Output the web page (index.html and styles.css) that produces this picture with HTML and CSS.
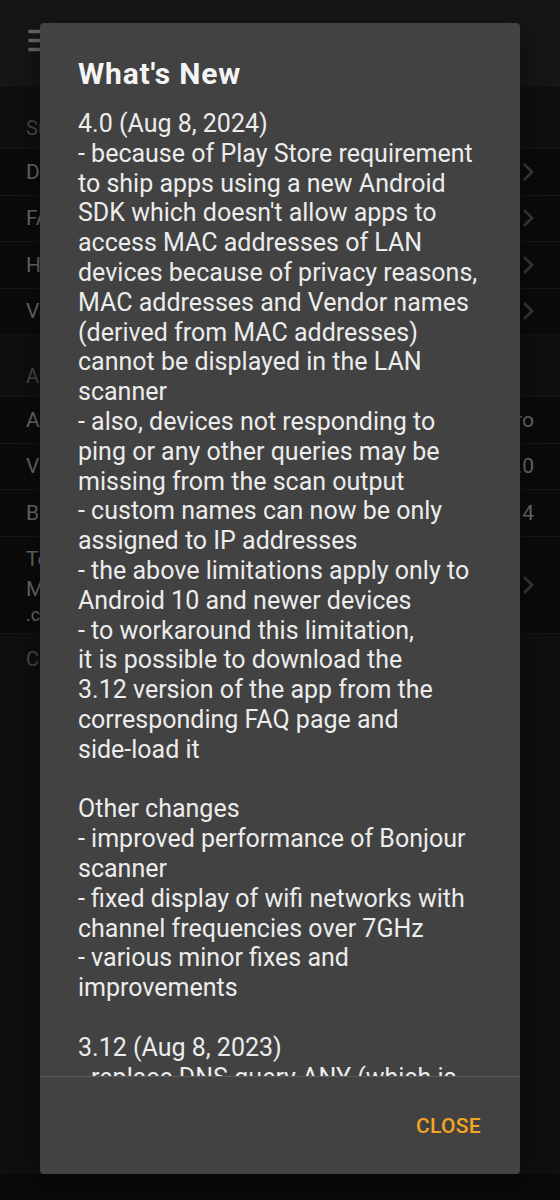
FILE: index.html
```html
<!DOCTYPE html>
<html lang="en">
  <head>
    <meta charset="UTF-8" />
    <title>Settings</title>
    <link rel="stylesheet" href="styles.css">
  </head>
  <body>
    <div class="app">
      <header class="toolbar">
        <svg class="menu-icon" viewBox="0 0 24 24">
          <path d="M3 18h18v-2H3v2zm0-5h18v-2H3v2zm0-7v2h18V6H3z" />
        </svg>
        <span class="toolbar-title">Settings</span>
      </header>

      <div class="section-title">Support</div>
      <ul class="list">
        <li class="row">
          <span>Documentation</span>
          <svg class="chevron" viewBox="0 0 12 20"><path d="M2 2l8 8-8 8" /></svg>
        </li>
        <li class="row">
          <span>FAQ</span>
          <svg class="chevron" viewBox="0 0 12 20"><path d="M2 2l8 8-8 8" /></svg>
        </li>
        <li class="row">
          <span>Help</span>
          <svg class="chevron" viewBox="0 0 12 20"><path d="M2 2l8 8-8 8" /></svg>
        </li>
        <li class="row">
          <span>Versions</span>
          <svg class="chevron" viewBox="0 0 12 20"><path d="M2 2l8 8-8 8" /></svg>
        </li>
      </ul>

      <div class="section-title">About</div>
      <ul class="list">
        <li class="row">
          <span>App</span>
          <span class="value">Pro</span>
        </li>
        <li class="row">
          <span>Version</span>
          <span class="value">4.0</span>
        </li>
        <li class="row">
          <span>Build</span>
          <span class="value">14</span>
        </li>
        <li class="row row-tall">
          <div class="row-text">
            <div>Terms</div>
            <div>More</div>
            <div class="row-sub">.com</div>
          </div>
          <svg class="chevron" viewBox="0 0 12 20"><path d="M2 2l8 8-8 8" /></svg>
        </li>
      </ul>

      <div class="section-title section-last">Credits</div>
    </div>

    <div class="dialog">
      <div class="dialog-content">
        <h2 class="dialog-title">What's New</h2>
        <div class="changelog">
          <p>
            4.0 (Aug 8, 2024)<br>
            - because of Play Store requirement<br>
            to ship apps using a new Android<br>
            SDK which doesn't allow apps to<br>
            access MAC addresses of LAN<br>
            devices because of privacy reasons,<br>
            MAC addresses and Vendor names<br>
            (derived from MAC addresses)<br>
            cannot be displayed in the LAN<br>
            scanner<br>
            - also, devices not responding to<br>
            ping or any other queries may be<br>
            missing from the scan output<br>
            - custom names can now be only<br>
            assigned to IP addresses<br>
            - the above limitations apply only to<br>
            Android 10 and newer devices<br>
            - to workaround this limitation,<br>
            it is possible to download the<br>
            3.12 version of the app from the<br>
            corresponding FAQ page and<br>
            side-load it
          </p>
          <p>
            Other changes<br>
            - improved performance of Bonjour<br>
            scanner<br>
            - fixed display of wifi networks with<br>
            channel frequencies over 7GHz<br>
            - various minor fixes and<br>
            improvements
          </p>
          <p>
            3.12 (Aug 8, 2023)<br>
            - replace DNS query ANY (which is
          </p>
        </div>
      </div>
      <div class="dialog-footer">
        <button class="close-btn" type="button">CLOSE</button>
      </div>
    </div>
  </body>
</html>
```

FILE: styles.css
```css
* {
  box-sizing: border-box;
}

body {
  margin: 0;
  width: 560px;
  height: 1200px;
  overflow: hidden;
  position: relative;
  background-color: #0a0a0a;
  font-family: Roboto, "Noto Sans", sans-serif;
}

/* app behind the dialog (already dimmed) */

.app {
  height: 1174px;
  background-color: #0f0f0f;
}

.toolbar {
  height: 87px;
  background-color: #161616;
  display: flex;
  align-items: flex-start;
  gap: 30px;
  padding: 19px 0 0 23px;
}

.menu-icon {
  width: 43px;
  height: 43px;
  fill: #6a6a6a;
}

.toolbar-title {
  margin-top: 7px;
  font-size: 24px;
  color: #6a6a6a;
}

.section-title {
  height: 61px;
  display: flex;
  align-items: flex-end;
  padding: 0 26px 8px;
  font-size: 20px;
  line-height: 24px;
  color: #4b4b4b;
}

.section-last {
  height: auto;
  padding-top: 13.5px;
}

.list {
  list-style: none;
  margin: 0;
  padding: 0;
  background-color: #0b0b0b;
  border-top: 1px solid #171717;
}

.row {
  height: 46.5px;
  display: flex;
  align-items: center;
  justify-content: space-between;
  padding: 0 26px;
  border-bottom: 1px solid #171717;
  font-size: 21px;
  color: #6b6b6b;
  white-space: nowrap;
}

.row-tall {
  height: auto;
  padding-top: 7px;
  padding-bottom: 7px;
  line-height: 30px;
}

.row-sub {
  font-size: 18px;
  line-height: 22px;
}

.value {
  color: #6b6b6b;
}

.chevron {
  width: 12px;
  height: 20px;
  fill: none;
  stroke: #3b3b3b;
  stroke-width: 2.6;
}

/* dialog */

.dialog {
  position: absolute;
  left: 40px;
  top: 23px;
  width: 480px;
  height: 1151px;
  display: flex;
  flex-direction: column;
  background-color: #424242;
  border-radius: 4px;
  box-shadow: 0 10px 30px rgba(0, 0, 0, 0.5);
}

.dialog-content {
  flex: 1;
  overflow: hidden;
  padding: 33px 10px 0 38px;
}

.dialog-title {
  margin: 0;
  font-size: 30px;
  font-weight: 700;
  line-height: 36px;
  letter-spacing: 0.8px;
  color: #f5f5f5;
}

.changelog {
  margin-top: 17px;
  font-size: 25px;
  line-height: 29.8px;
  color: #ececec;
  white-space: nowrap;
}

.changelog p {
  margin: 0 0 29.8px;
}

.dialog-footer {
  height: 98px;
  flex-shrink: 0;
  display: flex;
  align-items: center;
  justify-content: flex-end;
  padding-right: 39px;
  border-top: 1px solid #5c5c5c;
}

.close-btn {
  padding: 0;
  border: none;
  background: none;
  font-family: Roboto, "Noto Sans", sans-serif;
  font-size: 21px;
  font-weight: 500;
  letter-spacing: 0.3px;
  color: #f4a522;
  cursor: pointer;
}
```
